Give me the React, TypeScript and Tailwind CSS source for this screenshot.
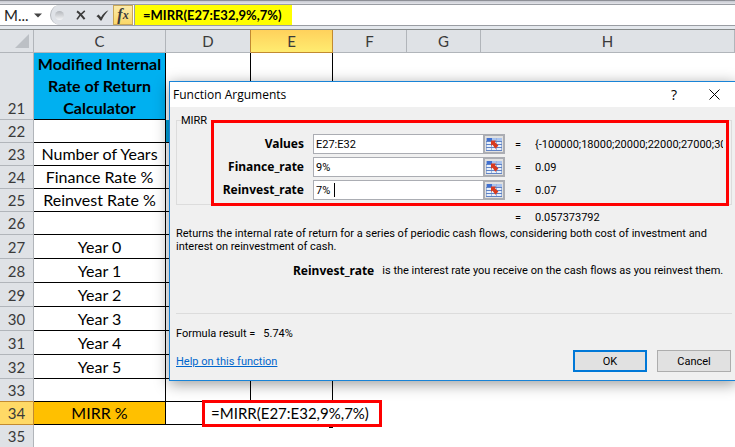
import React, { useState } from 'react';

interface SheetRow {
  id: number;
  label?: string;
  height: string;
}

const rows: SheetRow[] = [
  { id: 21, label: 'Modified Internal Rate of Return Calculator', height: 'h-[67px]' },
  { id: 22, height: 'h-[23px]' },
  { id: 23, label: 'Number of Years', height: 'h-[23px]' },
  { id: 24, label: 'Finance Rate %', height: 'h-[23px]' },
  { id: 25, label: 'Reinvest Rate %', height: 'h-[23px]' },
  { id: 26, height: 'h-[23px]' },
  { id: 27, label: 'Year 0', height: 'h-[24px]' },
  { id: 28, label: 'Year 1', height: 'h-[24px]' },
  { id: 29, label: 'Year 2', height: 'h-[24px]' },
  { id: 30, label: 'Year 3', height: 'h-[24px]' },
  { id: 31, label: 'Year 4', height: 'h-[24px]' },
  { id: 32, label: 'Year 5', height: 'h-[24px]' },
  { id: 33, height: 'h-[23px]' },
  { id: 34, label: 'MIRR %', height: 'h-[23px]' },
  { id: 35, height: 'h-[23px]' },
];

const columns = ['C', 'D', 'E', 'F', 'G', 'H'];

const FormulaBar: React.FC = () => (
  <div className="bg-[#e4e8ed]">
    <div className="h-[5px] border-t border-b border-t-[#8d8f96] border-b-[#9a9da3] bg-gradient-to-b from-[#c6c8d0] to-[#e4e5ea]" />
    <div className="flex h-[21px] items-stretch border-b border-[#9a9da3] bg-white">
      <input
        aria-label="Name box"
        defaultValue="M..."
        className="w-[34px] bg-white pl-1 text-[15px] leading-5 text-[#222] outline-none"
      />
      <button aria-label="Open name list" className="flex w-4 items-center">
        <svg width="8" height="5" viewBox="0 0 8 5">
          <path d="M0 0.5h8L4 4.5z" fill="#444" />
        </svg>
      </button>
      <div className="flex flex-none items-center rounded-l-full border-l border-[#b5b8bd] bg-[#dfe2e7] pl-1">
        <span className="h-[9px] w-[9px] rounded-full bg-gradient-to-b from-[#b4b7bc] to-[#f4f5f7]" />
        <button aria-label="Cancel" className="ml-3 flex h-5 w-5 items-center">
          <svg width="10" height="10" viewBox="0 0 10 10" fill="none" stroke="#3c3c3c">
            <path d="M1 1.4C3 2.6 6 6 8.6 9.2" strokeWidth="2" />
            <path d="M8.8 0.8C6 3 3 6 1 9.4" strokeWidth="1.6" />
          </svg>
        </button>
        <button aria-label="Enter" className="flex h-5 w-[17px] items-center justify-start">
          <svg width="13" height="11" viewBox="0 0 13 11">
            <path d="M0.4 6.2L2.6 4.6L5 7.2C6.8 4 9 1.8 12.4 0.2C9.6 3.4 7.6 6.4 5.6 10.4H4.4C3.2 8.6 2 7.2 0.4 6.2z" fill="#3c3c3c" />
          </svg>
        </button>
        <button
          aria-label="Insert function"
          className="flex h-5 w-5 items-center justify-center border border-[#c9a658] bg-gradient-to-b from-[#fbeaa9] to-[#fbd867] font-['Liberation_Serif',serif] text-[16px] leading-4 font-bold text-[#3c3c3c] italic"
        >
          f<span className="text-[12px]">x</span>
        </button>
      </div>
      <div className="ml-px flex-1 border-l border-[#9a9da3]">
        <input
          aria-label="Formula"
          defaultValue="=MIRR(E27:E32,9%,7%)"
          className="block h-5 w-[157px] bg-[#ffff00] pl-2 text-[13px] font-bold text-black outline-none"
        />
      </div>
    </div>
    <div className="h-[3px]" />
  </div>
);

const Sheet: React.FC = () => {
  const labelFill = (id: number) => {
    if (id === 21) return 'bg-[#00b0f0] font-bold';
    if (id === 34) return 'bg-[#ffc000]';
    return '';
  };

  return (
    <table className="w-full table-fixed border-separate border-spacing-0 border-t border-[#858a8a] text-center text-[16px] leading-[22px]">
      <colgroup>
        <col className="w-[34px]" />
        <col className="w-[132px]" />
        <col className="w-[85px]" />
        <col className="w-[82px]" />
        <col className="w-[74px]" />
        <col className="w-[74px]" />
        <col />
      </colgroup>
      <thead>
        <tr className="text-[#3a3a3a]">
          <th className="h-[23px] border-r border-b border-[#b1b5ba] bg-[#dfe2e6] p-0">
            <svg className="mr-1 ml-auto" width="14" height="14" viewBox="0 0 14 14">
              <path d="M14 0v14H0z" fill="#bcc0c5" />
            </svg>
          </th>
          {columns.map((col) => (
            <th
              key={col}
              className={`border-r border-b p-0 text-[15px] font-normal ${
                col === 'E'
                  ? 'border-[#c28a31] bg-gradient-to-b from-[#ffd15c] to-[#ffec70]'
                  : col === 'D'
                    ? 'border-r-[#c28a31] border-b-[#b1b5ba] bg-[#dfe2e6]'
                    : 'border-[#b1b5ba] bg-[#dfe2e6]'
              }`}
            >
              {col}
            </th>
          ))}
        </tr>
      </thead>
      <tbody>
        {rows.map(({ id, label, height }) => (
          <tr key={id} className={height}>
            <th
              className={`border-r border-b p-0 align-bottom text-[15px] font-normal text-[#3a3a3a] ${
                id === 34
                  ? 'border-[#c28a31] bg-[#ffd966]'
                  : id === 33
                    ? 'border-r-[#b1b5ba] border-b-[#c28a31] bg-[#dfe2e6]'
                    : 'border-[#b1b5ba] bg-[#dfe2e6]'
              }`}
            >
              {id}
            </th>
            <td className={`p-0 text-black ${id < 35 ? 'border-r border-b border-black' : ''} ${labelFill(id)}`}>{label}</td>
            <td
              className={`relative p-0 ${id < 35 && id !== 21 ? 'border-b border-b-black' : ''} ${id < 34 ? 'border-r border-r-black' : ''} ${id === 22 ? 'bg-[#00a3dd]' : ''}`}
            >
              {id === 34 && (
                <div className="absolute -top-0.5 left-9 z-10 h-[27px] w-[180px] border-3 border-[#fe0000] bg-white pr-1 text-center text-[15px] leading-[21px] text-black">
                  =MIRR(E27:E32,9%,7%)
                </div>
              )}
            </td>
            <td className={`relative p-0 ${id < 34 ? 'border-r border-black' : ''}`}>
              {id === 34 && <span className="absolute right-0 -bottom-[3px] h-0.5 w-1 bg-black" />}
            </td>
            <td className="p-0" />
            <td className="p-0" />
            <td className="p-0" />
          </tr>
        ))}
      </tbody>
    </table>
  );
};

const RangeIcon: React.FC = () => (
  <svg width="16" height="13" viewBox="0 0 16 13">
    <rect width="16" height="13" fill="#e8f0fb" />
    <rect width="6" height="3" fill="#3f6fd0" />
    <rect x="6" width="10" height="3" fill="#a9c3ee" />
    <path d="M0.5 0v13M5.5 3v10M10.5 0v13M15.5 3v10" stroke="#9fb4d8" />
    <path d="M0 3.5h16M0 6.5h16M0 9.5h16M0 12.5h16" stroke="#5f83c6" />
    <path d="M5 2.5h5L8.8 4L12.4 7.6L9.4 10.8L6.4 6.6L5 8z" fill="#d93a1e" />
  </svg>
);

interface ArgumentFieldProps {
  label: string;
  value: string;
  result: string;
  onChange: (value: string) => void;
  active?: boolean;
}

const ArgumentField: React.FC<ArgumentFieldProps> = ({ label, value, result, onChange, active }) => (
  <div className="flex items-center">
    <label htmlFor={label} className="w-[127px] flex-none text-right font-['Noto_Sans',sans-serif] text-[12px] leading-[18px] font-bold">
      {label}
    </label>
    <div className="relative ml-[9px] flex h-5 w-[192px] flex-none border border-[#abadb3] bg-white">
      <input
        id={label}
        value={value}
        onChange={(e) => onChange(e.target.value)}
        className="min-w-0 flex-1 bg-white pl-0.5 outline-none"
      />
      {active && <span className="absolute top-0.5 left-5 h-3.5 w-px bg-black" />}
      <button
        aria-label={`Select range for ${label}`}
        className="-my-px -mr-px flex w-[22px] items-center justify-center border-2 border-[#abadb3] bg-[#e1e1e1]"
      >
        <RangeIcon />
      </button>
    </div>
    <span className="ml-2.5 w-5 flex-none">=</span>
    <output htmlFor={label} className="min-w-0 flex-1 overflow-hidden whitespace-nowrap">
      {result}
    </output>
  </div>
);

const FunctionDialog: React.FC = () => {
  const [args, setArgs] = useState({ values: 'E27:E32', finance: '9%', reinvest: '7%' });

  return (
    <div
      role="dialog"
      aria-label="Function Arguments"
      className="absolute top-[81px] -right-0.5 left-[169px] z-20 border border-[#1883d7] bg-[#f0f0f0] font-['Roboto',sans-serif] text-[11px] leading-[13px] text-black shadow-[0_3px_14px_rgba(0,0,0,0.4)]"
    >
      <div className="flex h-[25px] items-center bg-white pl-[3px] font-['Open_Sans',sans-serif] text-[12px]">
        <h1 className="flex-1">Function Arguments</h1>
        <button aria-label="Help" className="w-5 text-[14px]">?</button>
        <button aria-label="Close" className="mr-4 ml-6 flex w-3 justify-center">
          <svg width="11" height="11" viewBox="0 0 11 11" stroke="#000" fill="none">
            <path d="M0.5 0.5l10 10M10.5 0.5l-10 10" />
          </svg>
        </button>
      </div>
      <div className="pt-[7px] pr-1 pb-2 pl-1.5">
        <fieldset className="relative min-w-0 border border-[#dcdcdc] pt-[7px] pr-2 pb-1">
          <legend className="ml-1 pr-1">MIRR</legend>
          <div className="flex flex-col gap-[3px]">
            <ArgumentField
              label="Values"
              value={args.values}
              result="{-100000;18000;20000;22000;27000;30"
              onChange={(values) => setArgs({ ...args, values })}
            />
            <ArgumentField
              label="Finance_rate"
              value={args.finance}
              result="0.09"
              onChange={(finance) => setArgs({ ...args, finance })}
            />
            <ArgumentField
              label="Reinvest_rate"
              value={args.reinvest}
              result="0.07"
              onChange={(reinvest) => setArgs({ ...args, reinvest })}
              active
            />
          </div>
          <div className="pointer-events-none absolute -top-[7px] right-0.5 -bottom-0.5 left-[34px] border-3 border-[#fe0000]" />
        </fieldset>
        <p className="mt-[6px] flex pl-[339px]">
          <span className="w-5">=</span>0.057373792
        </p>
        <p className="mt-[3px] w-[540px]">
          Returns the internal rate of return for a series of periodic cash flows, considering both cost of investment and
          interest on reinvestment of cash.
        </p>
        <p className="mt-[11px] flex gap-2 pl-[117px] whitespace-nowrap">
          <b className="font-['Noto_Sans',sans-serif] text-[12px]">Reinvest_rate</b>
          <span>is the interest rate you receive on the cash flows as you reinvest them.</span>
        </p>
        <hr className="mt-9 border-[#dcdcdc]" />
        <p className="mt-[13px]">
          Formula result =<span className="ml-2">5.74%</span>
        </p>
        <div className="mt-2.5 flex items-center gap-2.5 pr-px">
          <a href="#help" className="flex-1 text-[#0066cc] underline">
            Help on this function
          </a>
          <button className="h-[22px] w-[74px] border-2 border-[#0078d7] bg-[#e1e1e1]">OK</button>
          <button className="h-[22px] w-[74px] border border-[#adadad] bg-[#e1e1e1]">Cancel</button>
        </div>
      </div>
    </div>
  );
};

const App: React.FC = () => (
  <div className="relative min-h-screen overflow-hidden bg-white font-['Lato',sans-serif]">
    <FormulaBar />
    <Sheet />
    <FunctionDialog />
  </div>
);

export default App;
